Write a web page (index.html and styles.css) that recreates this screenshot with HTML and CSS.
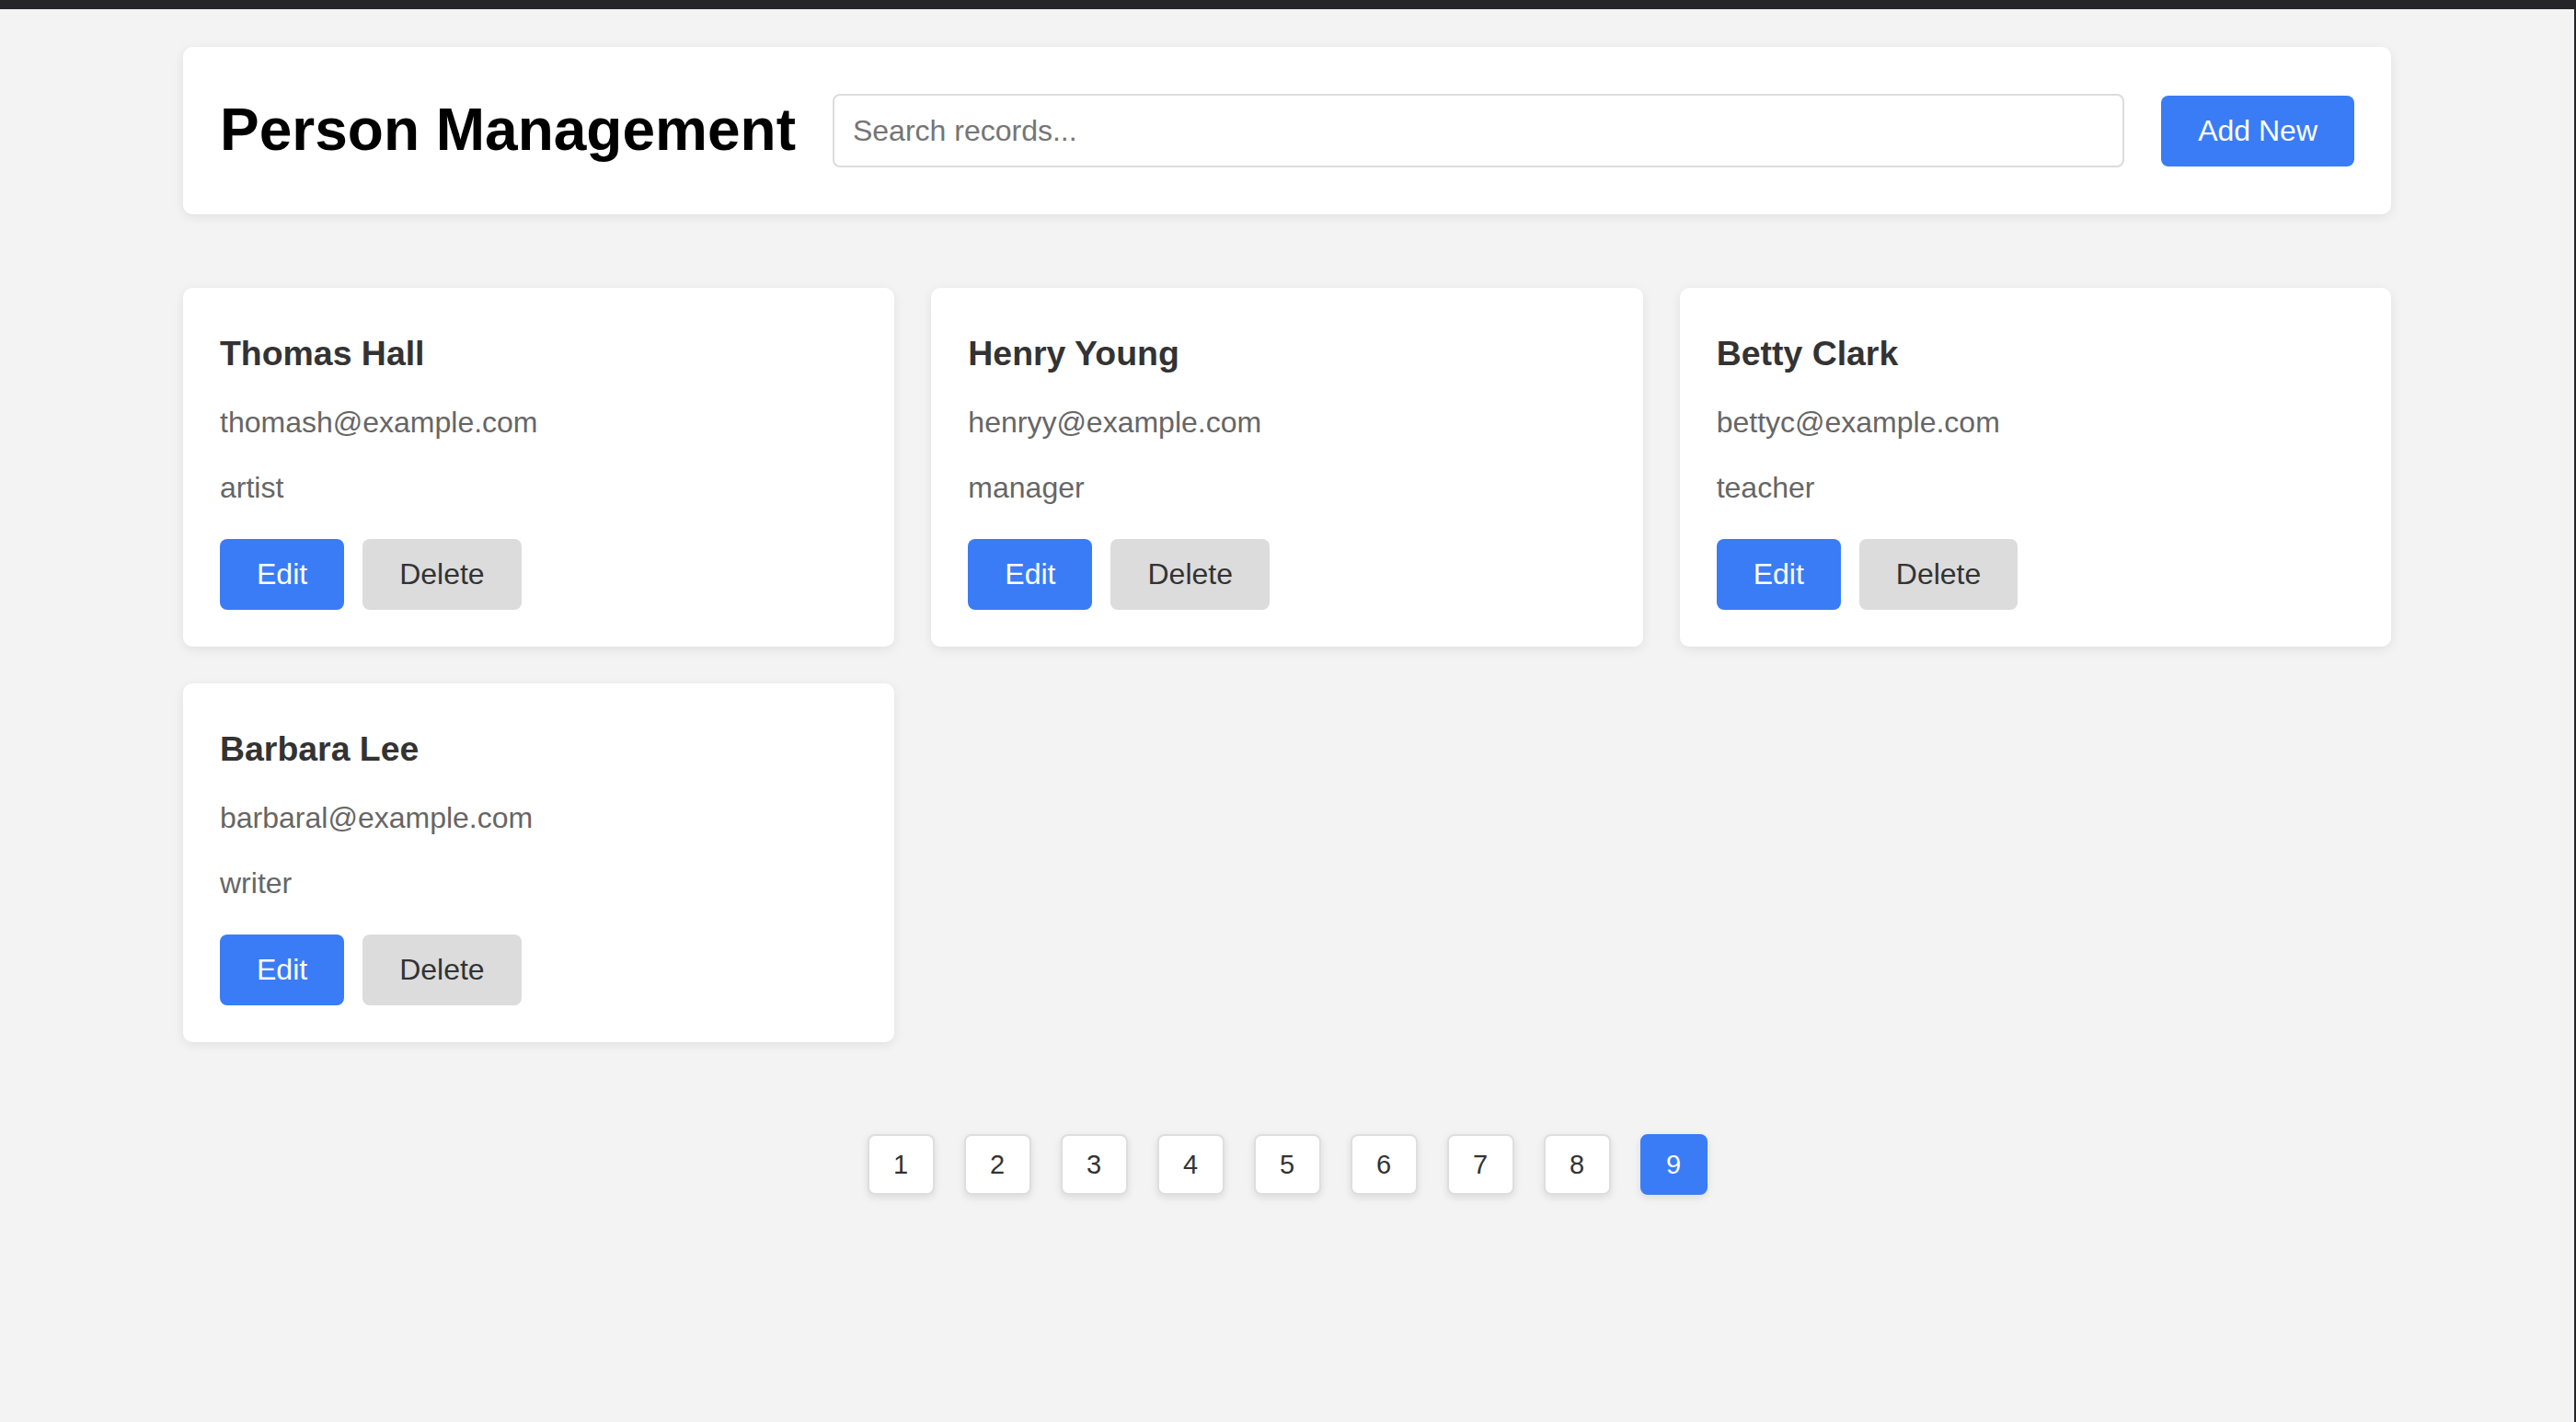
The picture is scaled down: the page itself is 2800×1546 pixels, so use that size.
FILE: index.html
```html
<!DOCTYPE html>
<html lang="en">
<head>
<meta charset="utf-8">
<title>Person Management</title>
<link rel="stylesheet" href="styles.css">
</head>
<body>
<div class="frame">
  <div class="topbar"></div>
  <main class="container">
    <header class="header-card">
      <h1 class="title">Person Management</h1>
      <input class="search" type="text" placeholder="Search records...">
      <button class="btn btn-primary">Add New</button>
    </header>

    <section class="grid">
      <article class="card">
        <h3 class="card-name">Thomas Hall</h3>
        <p class="card-text">thomash@example.com</p>
        <p class="card-text">artist</p>
        <div class="card-actions">
          <button class="btn btn-primary">Edit</button>
          <button class="btn btn-secondary">Delete</button>
        </div>
      </article>
      <article class="card">
        <h3 class="card-name">Henry Young</h3>
        <p class="card-text">henryy@example.com</p>
        <p class="card-text">manager</p>
        <div class="card-actions">
          <button class="btn btn-primary">Edit</button>
          <button class="btn btn-secondary">Delete</button>
        </div>
      </article>
      <article class="card">
        <h3 class="card-name">Betty Clark</h3>
        <p class="card-text">bettyc@example.com</p>
        <p class="card-text">teacher</p>
        <div class="card-actions">
          <button class="btn btn-primary">Edit</button>
          <button class="btn btn-secondary">Delete</button>
        </div>
      </article>
      <article class="card">
        <h3 class="card-name">Barbara Lee</h3>
        <p class="card-text">barbaral@example.com</p>
        <p class="card-text">writer</p>
        <div class="card-actions">
          <button class="btn btn-primary">Edit</button>
          <button class="btn btn-secondary">Delete</button>
        </div>
      </article>
    </section>

    <nav class="pagination">
      <button class="page">1</button>
      <button class="page">2</button>
      <button class="page">3</button>
      <button class="page">4</button>
      <button class="page">5</button>
      <button class="page">6</button>
      <button class="page">7</button>
      <button class="page">8</button>
      <button class="page page-active">9</button>
    </nav>
  </main>
</div>
</body>
</html>
```

FILE: styles.css
```css
* {
  box-sizing: border-box;
}

html, body {
  margin: 0;
  padding: 0;
}

body {
  background: #f3f3f3;
  font-family: "Liberation Sans", Arial, sans-serif;
  color: #333;
}

.frame {
  min-height: 100vh;
  border-right: 2px solid #242429;
  display: flex;
  flex-direction: column;
}

.topbar {
  height: 10px;
  background: #242429;
  flex: none;
}

.container {
  width: 2400px;
  margin: 0 auto;
  padding-top: 41px;
}

.header-card {
  display: flex;
  align-items: center;
  gap: 40px;
  background: #fff;
  border-radius: 10px;
  padding: 51px 40px;
  box-shadow: 0 3px 12px rgba(0, 0, 0, 0.08);
}

.title {
  margin: 0;
  font-size: 64px;
  font-weight: 700;
  color: #000;
  white-space: nowrap;
  line-height: 1.15;
}

.search {
  flex: 1;
  min-width: 0;
  height: 80px;
  padding: 0 20px;
  font-family: "Liberation Sans", Arial, sans-serif;
  font-size: 32px;
  color: #333;
  border: 2px solid #dcdcdc;
  border-radius: 8px;
  background: #fff;
  outline: none;
}

.search::placeholder {
  color: #757575;
}

.btn {
  font-family: "Liberation Sans", Arial, sans-serif;
  font-size: 32px;
  line-height: 37px;
  padding: 20px 40px;
  border: none;
  border-radius: 8px;
  cursor: pointer;
  white-space: nowrap;
}

.btn-primary {
  background: #3a7cf6;
  color: #fff;
}

.btn-secondary {
  background: #dcdcdc;
  color: #333;
}

.grid {
  display: grid;
  grid-template-columns: repeat(3, 1fr);
  gap: 40px;
  margin-top: 80px;
}

.card {
  background: #fff;
  border-radius: 10px;
  padding: 42px 40px 40px;
  box-shadow: 0 3px 12px rgba(0, 0, 0, 0.08);
}

.card-name {
  margin: 0 0 22px;
  font-size: 37.44px;
  line-height: 58px;
  font-weight: 700;
  color: #333;
}

.card-text {
  margin: 0 0 23px;
  font-size: 32px;
  line-height: 48px;
  color: #666;
}

.card-text + .card-text {
  margin-bottom: 0;
}

.card-actions {
  display: flex;
  gap: 20px;
  margin-top: 32px;
}

.pagination {
  display: flex;
  justify-content: center;
  gap: 32px;
  margin-top: 100px;
}

.page {
  width: 73px;
  height: 66px;
  display: flex;
  align-items: center;
  justify-content: center;
  font-family: "Liberation Sans", Arial, sans-serif;
  font-size: 29px;
  color: #333;
  background: #fff;
  border: 2px solid #dedede;
  border-radius: 8px;
  box-shadow: 0 3px 8px rgba(0, 0, 0, 0.1);
  padding: 0;
  cursor: pointer;
}

.page-active {
  background: #3a7cf6;
  border-color: #3a7cf6;
  color: #fff;
}
```
